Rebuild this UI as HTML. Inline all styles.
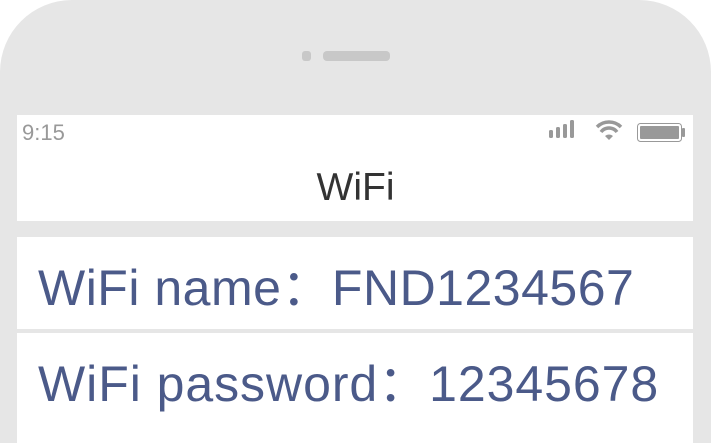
<!DOCTYPE html>
<html><head><style>
html,body{margin:0;padding:0;width:711px;height:443px;overflow:hidden;background:#fff;}
.phone{position:absolute;left:0;top:0;width:711px;height:443px;background:#e6e6e6;border-radius:72px 72px 0 0;overflow:hidden;}
.dot{position:absolute;top:51px;width:9px;height:10px;border-radius:3px;background:#c8c8c8;}
.spk{position:absolute;top:51px;width:67px;height:10px;border-radius:4px;background:#c8c8c8;}
.scr{position:absolute;left:17px;top:115px;width:676px;height:106px;background:#fff;}
.time{position:absolute;left:22px;top:120px;font:22px "Liberation Sans",sans-serif;color:#999;}
.title{position:absolute;left:0;width:711px;text-align:center;top:166px;font:39px "Liberation Sans",sans-serif;color:#333;}
.row{position:absolute;left:17px;width:676px;background:#fff;}
.t{position:absolute;left:38px;font:50px "Liberation Sans","Noto Sans CJK SC",sans-serif;color:#4b5a89;white-space:nowrap;}
</style></head><body>
<div class="phone"></div>
<div class="dot" style="left:302px"></div><div class="spk" style="left:323px"></div>
<div class="scr"></div>
<div class="time">9:15</div>
<svg style="position:absolute;left:545px;top:118px" width="145" height="28">
<rect x="4" y="12" width="4" height="8" rx="1.5" fill="#999"/>
<rect x="11" y="9" width="4" height="11" rx="1.5" fill="#999"/>
<rect x="18" y="6" width="4" height="14" rx="1.5" fill="#999"/>
<rect x="25" y="2" width="4" height="18" rx="1.5" fill="#999"/>
<path d="M52 9 a17 17 0 0 1 24 0" stroke="#999" stroke-width="3.5" fill="none"/>
<path d="M56 14 a10 10 0 0 1 16 0" stroke="#999" stroke-width="3.5" fill="none"/>
<path d="M60 18 l4 4 l4 -4 a6 6 0 0 0 -8 0z" fill="#999"/>
<rect x="92.5" y="5.5" width="44" height="18" rx="3" fill="#fff" stroke="#999" stroke-width="1"/>
<rect x="95" y="8" width="39" height="13" rx="1" fill="#999"/>
<rect x="137" y="10" width="3" height="9" rx="1" fill="#999"/>
</svg>
<div class="title">WiFi</div>
<div class="row" style="top:237px;height:92px"></div>
<div class="row" style="top:333px;height:110px"></div>
<div class="t" style="top:248px;letter-spacing:0.5px">WiFi name：FND1234567</div>
<div class="t" style="top:344px;letter-spacing:0.95px">WiFi password：12345678</div>
</body></html>
